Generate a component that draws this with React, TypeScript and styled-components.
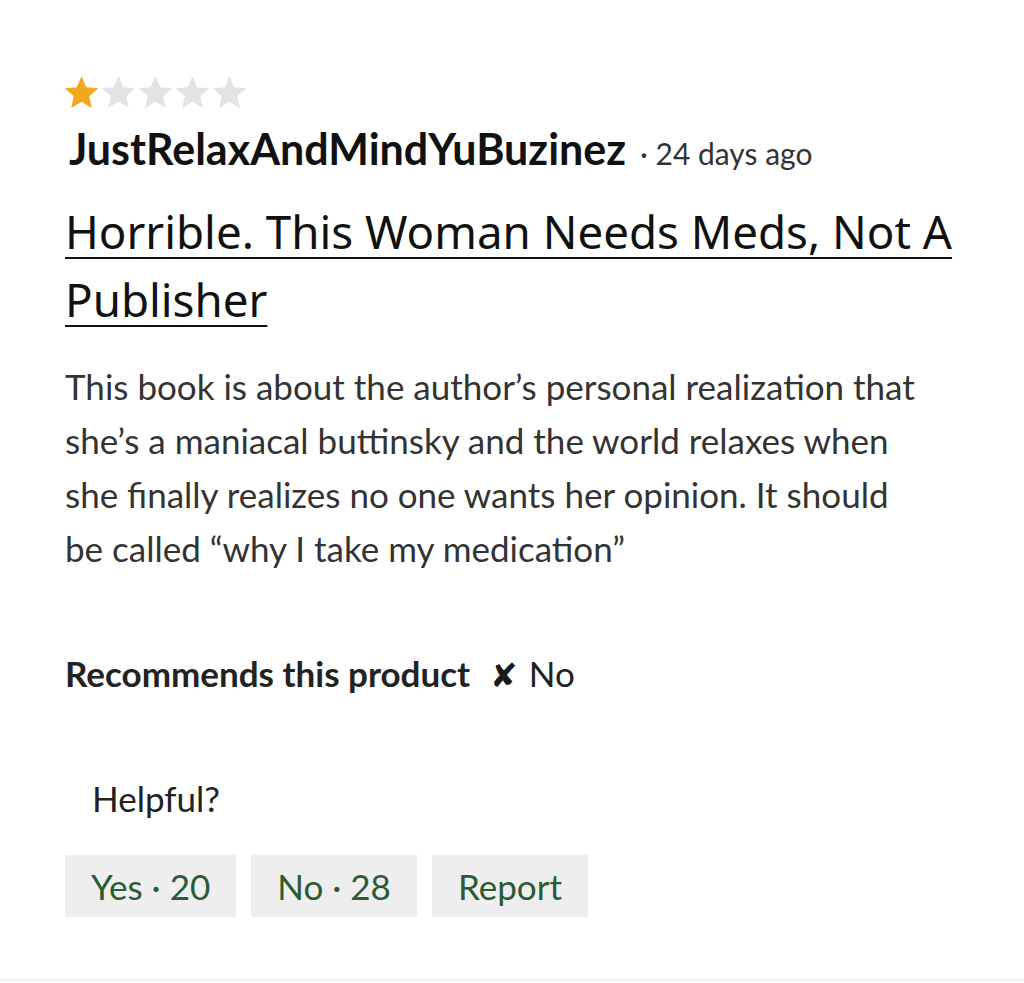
import React from 'react';
import styled, {createGlobalStyle} from "styled-components";

const GlobalStyle = createGlobalStyle`
    html, body {
        margin: 0;
        padding: 0;
        background: #ffffff;
    }

    body {
        font-family: Lato, "Noto Sans", sans-serif;
        color: #333333;
    }
`

const STAR_PATH = "M12 1.5l3.1 7.1 7.7.7-5.8 5.1 1.7 7.6L12 18l-6.7 4 1.7-7.6-5.8-5.1 7.7-.7z"

const Star = ({filled}: { filled: boolean }) => (
    <StarIcon viewBox="0 0 24 24" $filled={filled}>
        <path d={STAR_PATH}/>
    </StarIcon>
)

const rating = 1

export default function App() {
    return (
        <>
            <GlobalStyle/>
            <Review>
                <Stars aria-label={`${rating} out of 5 stars`}>
                    {[1, 2, 3, 4, 5].map(n => <Star key={n} filled={n <= rating}/>)}
                </Stars>
                <AuthorRow>
                    <Author>JustRelaxAndMindYuBuzinez</Author>
                    <Meta>· 24 days ago</Meta>
                </AuthorRow>
                <Title href="#">Horrible. This Woman Needs Meds, Not A Publisher</Title>
                <Body>
                    This book is about the author’s personal realization that she’s a maniacal buttinsky and the
                    world relaxes when she finally realizes no one wants her opinion. It should be called “why I
                    take my medication”
                </Body>
                <Recommend>
                    <RecommendLabel>Recommends this product</RecommendLabel>
                    <RecommendValue><Cross>✘</Cross> No</RecommendValue>
                </Recommend>
                <Helpful>Helpful?</Helpful>
                <Actions>
                    <ActionButton>Yes · 20</ActionButton>
                    <ActionButton>No · 28</ActionButton>
                    <ActionButton>Report</ActionButton>
                </Actions>
            </Review>
        </>
    );
}

const Review = styled.article`
    width: 1024px;
    height: 981px;
    box-sizing: border-box;
    padding: 74px 65px 0;
    border-bottom: 2px solid #f3f3f3;
    display: flex;
    flex-direction: column;
`

const Stars = styled.div`
    display: flex;
    margin-left: -2px;
`

const StarIcon = styled.svg<{ $filled: boolean }>`
    width: 37px;
    height: 37px;
    fill: ${p => p.$filled ? "#f0a81c" : "#e3e3e3"};
`

const AuthorRow = styled.div`
    display: flex;
    align-items: baseline;
    gap: 14px;
    margin-top: 12px;
    padding-left: 4px;
`

const Author = styled.span`
    font-size: 43px;
    font-weight: 700;
    color: #111111;
    line-height: 1.2;
`

const Meta = styled.span`
    font-size: 30px;
    color: #333333;
`

const Title = styled.a`
    display: block;
    margin-top: 22px;
    font-family: "Noto Sans", sans-serif;
    font-size: 45.7px;
    line-height: 68px;
    color: #111111;
    text-decoration: underline;
    text-decoration-thickness: 2px;
    text-underline-offset: 8px;
    max-width: 910px;
`

const Body = styled.p`
    margin: 26px 0 0;
    font-size: 35px;
    line-height: 54px;
    color: #333333;
    max-width: 860px;
`

const Recommend = styled.div`
    display: flex;
    align-items: baseline;
    gap: 20px;
    margin-top: 77px;
    font-size: 35px;
    color: #222222;
`

const RecommendLabel = styled.span`
    font-weight: 700;
`

const RecommendValue = styled.span`
    display: flex;
    align-items: baseline;
    gap: 11px;
`

const Cross = styled.span`
    font-family: "DejaVu Sans", sans-serif;
    font-size: 33px;
    color: #1a1a1a;
`

const Helpful = styled.div`
    margin-top: 82px;
    padding-left: 27px;
    font-size: 35px;
    color: #222222;
`

const Actions = styled.div`
    display: flex;
    gap: 15px;
    margin-top: 36px;
`

const ActionButton = styled.button`
    height: 62px;
    padding: 0 26px;
    border: none;
    background: #eeeeee;
    font-family: Lato, sans-serif;
    font-size: 35px;
    color: #2b5b34;
    cursor: pointer;
`
